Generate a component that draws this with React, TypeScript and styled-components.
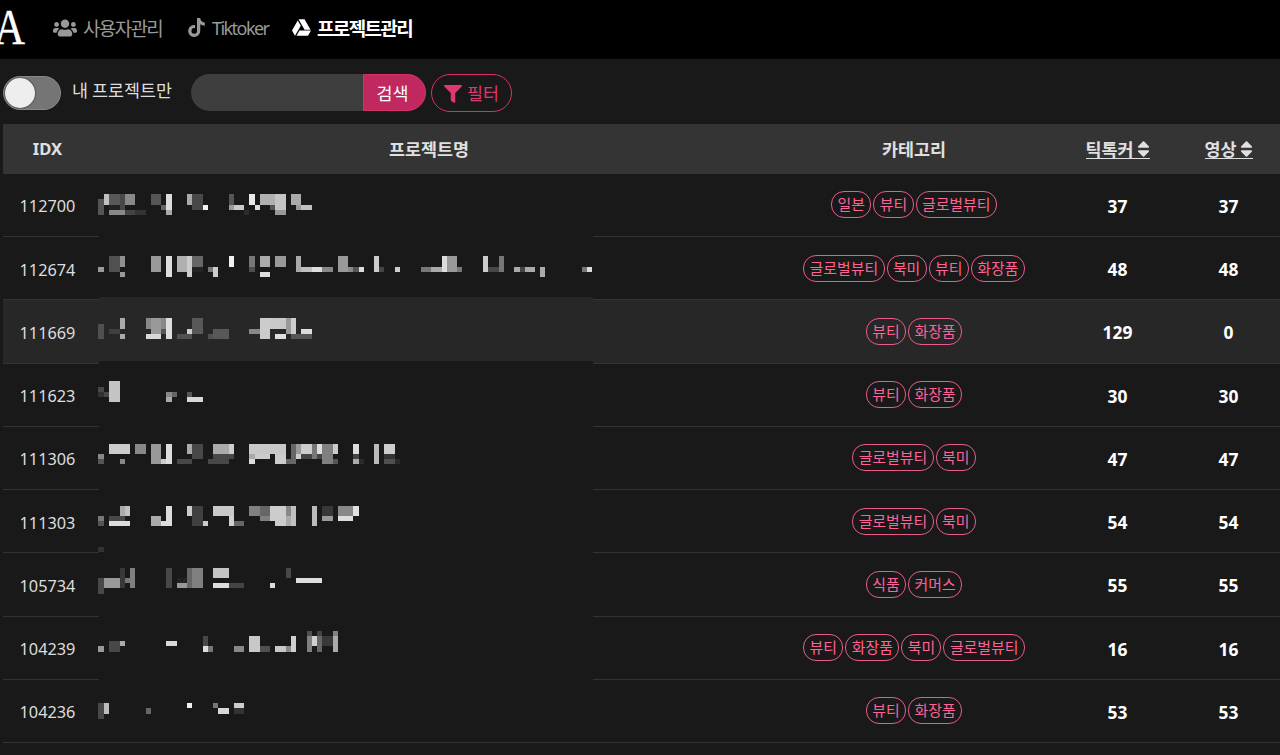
import React from "react";
import styled, { createGlobalStyle } from "styled-components";
import {
  FaUsers,
  FaTiktok,
  FaGoogleDrive,
  FaFilter,
  FaSort,
} from "react-icons/fa";

const GlobalStyle = createGlobalStyle`
  body {
    margin: 0;
    overflow: hidden;
    background-color: #191919;
    color: #ddd;
    font-family: "Noto Sans", "Noto Sans CJK KR", sans-serif;
  }
`;

const Header = styled.header`
  display: flex;
  align-items: center;
  height: 59px;
  padding-bottom: 4px;
  box-sizing: border-box;
  background-color: #000;
`;

const Logo = styled.div`
  width: 25px;
  margin-right: 28px;
  display: flex;
  justify-content: flex-end;
  color: #fff;
  font-family: "Liberation Serif", serif;
  font-size: 51px;
  line-height: 55px;
  transform: scaleX(0.84);
  transform-origin: right;
  -webkit-text-stroke: 0.4px #fff;
`;

const NavItem = styled.a<{ $active?: boolean; $width: number }>`
  display: flex;
  align-items: center;
  width: ${(p) => p.$width}px;
  color: ${(p) => (p.$active ? "#fff" : "#999")};
  font-family: "Noto Sans CJK KR", sans-serif;
  font-size: 19px;
  font-weight: ${(p) => (p.$active ? 700 : 400)};
  letter-spacing: -1.65px;
  white-space: nowrap;

  svg {
    flex: none;
    margin-right: 6px;
  }
`;

const Latin = styled.span`
  font-family: "Noto Sans", sans-serif;
  font-size: 18px;
  letter-spacing: -1.55px;
`;

const Toolbar = styled.div`
  display: flex;
  align-items: center;
  height: 65px;
  padding: 2px 0 0 3px;
  box-sizing: border-box;
  font-family: "Noto Sans CJK KR", sans-serif;
  font-size: 17.4px;
`;

const Toggle = styled.div`
  flex: none;
  width: 58px;
  height: 34px;
  padding: 2px;
  box-sizing: border-box;
  border: 1px solid #888;
  border-radius: 17px;
  background-color: #757575;
`;

const Knob = styled.div`
  width: 30px;
  height: 30px;
  margin-top: -1px;
  margin-left: -1px;
  border-radius: 50%;
  background-color: #eee;
  box-shadow: 0 0 2px #222;
`;

const ToggleLabel = styled.span`
  flex: none;
  width: 130px;
  padding: 0 0 6px 11px;
  box-sizing: border-box;
  white-space: nowrap;
`;

const SearchInput = styled.div`
  width: 172px;
  height: 37px;
  border-radius: 19px 0 0 19px;
  background-color: #3e3e3e;
`;

const SearchButton = styled.div`
  width: 63px;
  height: 37px;
  margin-right: 5px;
  padding-right: 4px;
  box-sizing: border-box;
  border: 1px solid #d83168;
  border-radius: 0 19px 19px 0;
  background-color: #c0295f;
  color: #fff;
  line-height: 36px;
  text-align: center;
`;

const FilterButton = styled.div`
  display: flex;
  align-items: center;
  justify-content: center;
  gap: 5px;
  width: 81px;
  height: 38px;
  box-sizing: border-box;
  border: 1px solid #d83168;
  border-radius: 19px;
  color: #e0376f;

  svg {
    margin-top: 2px;
  }
`;

const Table = styled.div`
  width: 1281px;
  margin-left: 3px;
`;

const columns = "89px 674px 296px 111px 111px";

const HeadRow = styled.div`
  position: relative;
  z-index: 1;
  display: grid;
  grid-template-columns: ${columns};
  align-items: center;
  height: 49.75px;
  background-color: #343434;
  color: #e0e0e0;
  font-size: 17.4px;
  font-weight: 700;
  text-align: center;
`;

const IdxHead = styled.div`
  font-size: 16.6px;
`;

const SortLabel = styled.span`
  display: inline-flex;
  align-items: center;
  gap: 3px;
  height: 18px;
  border-bottom: 1.5px solid #e0e0e0;
  line-height: 18px;

  svg {
    width: 13px;
    height: 20px;
  }
`;

const Row = styled.div<{ $hover?: boolean }>`
  --row-bg: ${(p) => (p.$hover ? "#272727" : "#191919")};
  display: grid;
  grid-template-columns: ${columns};
  align-items: center;
  height: 63.25px;
  box-sizing: border-box;
  border-bottom: 1px solid #333;
  background-color: var(--row-bg);
  text-align: center;
`;

const Idx = styled.div`
  padding-top: 3px;
  font-size: 16.3px;
`;

const Name = styled.div`
  position: relative;
  align-self: stretch;
`;

const Mask = styled.svg`
  position: absolute;
  top: -3px;
  left: 6px;
  width: 495px;
  height: 63.25px;
`;

const Tags = styled.div`
  display: flex;
  justify-content: center;
  gap: 2px;
`;

const Tag = styled.span`
  height: 27px;
  padding: 0 5.4px;
  box-sizing: border-box;
  border: 1px solid #ea5a8c;
  border-radius: 13px;
  color: #ff6296;
  font-family: "Noto Sans CJK KR", sans-serif;
  font-size: 14.9px;
  line-height: 24px;
`;

const Count = styled.div`
  padding-top: 2px;
  color: #fff;
  font-size: 17.4px;
  font-weight: 700;
`;

// column, row, width, height (in cells) and grey level
type Block = [number, number, number, number, string];

interface Project {
  idx: number;
  tags: string[];
  tiktokers: number;
  videos: number;
  hover?: boolean;
  line: number;
  blocks: Block[];
}

const projects: Project[] = [
  {
    idx: 112700,
    tags: ["일본", "뷰티", "글로벌뷰티"],
    tiktokers: 37,
    videos: 37,
    line: 0,
    blocks: [
      [0, 1, 1, 3, "#555"], [1, 0, 1, 2, "#c0c0c0"], [2, 0, 2, 2, "#585858"],
      [4, 0, 1, 3, "#484848"], [2, 2, 2, 1, "#222"], [5, 0, 2, 2, "#888"],
      [2, 3, 3, 1, "#888"], [5, 3, 2, 1, "#444"], [7, 3, 2, 1, "#333"],
      [10, 0, 2, 2, "#555"], [12, 2, 1, 1, "#666"], [13, 0, 1, 3, "#ddd"],
      [13, 3, 1, 1, "#aaa"], [17, 0, 1, 2, "#aaa"], [18, 0, 2, 3, "#484848"],
      [20, 2, 1, 1, "#f4f4f4"], [25, 0, 1, 2, "#555"], [25, 2, 1, 1, "#999"],
      [26, 2, 2, 1, "#c8c8c8"], [28, 3, 1, 1, "#2c2c2c"], [29, 0, 1, 2, "#e8e8e8"],
      [30, 2, 1, 1, "#ddd"], [31, 0, 3, 2, "#b0b0b0"], [33, 2, 1, 1, "#555"],
      [34, 0, 2, 3, "#c4c4c4"], [34, 3, 2, 1, "#999"], [37, 0, 2, 2, "#aaa"],
      [38, 2, 1, 1, "#999"], [39, 2, 2, 1, "#c0c0c0"],
    ],
  },
  {
    idx: 112674,
    tags: ["글로벌뷰티", "북미", "뷰티", "화장품"],
    tiktokers: 48,
    videos: 48,
    line: 12,
    blocks: [
      [0, 2, 1, 1, "#999"], [2, 0, 2, 3, "#505050"], [4, 0, 1, 2, "#909090"],
      [4, 3, 1, 1, "#999"], [10, 0, 2, 3, "#999"], [13, 0, 1, 4, "#ddd"],
      [15, 0, 2, 3, "#b0b0b0"], [17, 0, 1, 4, "#ccc"], [18, 0, 2, 2, "#666"],
      [18, 2, 2, 1, "#242424"], [21, 2, 1, 1, "#777"], [22, 2, 1, 2, "#ccc"],
      [25, 0, 1, 2, "#f0f0f0"], [29, 0, 1, 2, "#777"], [29, 2, 1, 1, "#505050"],
      [31, 0, 2, 2, "#aaa"], [31, 3, 2, 1, "#ddd"], [34, 0, 2, 2, "#999"],
      [38, 0, 1, 3, "#aaa"], [39, 2, 2, 1, "#c0c0c0"], [41, 2, 2, 1, "#ddd"],
      [43, 2, 2, 1, "#888"], [46, 0, 2, 3, "#999"], [48, 2, 1, 1, "#888"],
      [49, 2, 1, 1, "#555"], [50, 2, 1, 1, "#ddd"], [53, 0, 1, 3, "#ccc"],
      [54, 2, 1, 1, "#444"], [57, 2, 1, 1, "#ccc"], [62, 2, 2, 1, "#777"],
      [64, 2, 2, 1, "#aaa"], [66, 0, 1, 3, "#ddd"], [67, 0, 2, 3, "#999"],
      [69, 2, 1, 1, "#777"], [74, 0, 1, 3, "#ccc"], [75, 2, 2, 1, "#484848"],
      [77, 0, 1, 3, "#777"], [80, 2, 1, 1, "#aaa"], [81, 2, 1, 1, "#444"],
      [82, 2, 2, 1, "#aaa"], [85, 2, 1, 2, "#aaa"], [93, 2, 1, 1, "#777"],
      [94, 2, 1, 1, "#ddd"],
    ],
  },
  {
    idx: 111669,
    tags: ["뷰티", "화장품"],
    tiktokers: 129,
    videos: 0,
    hover: true,
    line: 24,
    blocks: [
      [0, 1, 1, 3, "#505050"], [2, 2, 2, 1, "#404040"], [4, 0, 1, 2, "#aaa"],
      [4, 3, 1, 1, "#aaa"], [9, 0, 1, 2, "#888"], [10, 0, 2, 3, "#999"],
      [9, 3, 3, 1, "#d8d8d8"], [12, 0, 1, 2, "#888"], [12, 2, 1, 1, "#555"],
      [13, 0, 1, 4, "#ddd"], [15, 3, 3, 1, "#505050"], [17, 2, 1, 1, "#ccc"],
      [18, 0, 2, 3, "#585858"], [21, 3, 1, 1, "#505050"], [22, 2, 3, 2, "#585858"],
      [29, 2, 2, 1, "#888"], [31, 0, 2, 4, "#ccc"], [33, 0, 3, 2, "#c8c8c8"],
      [36, 0, 1, 3, "#999"], [37, 0, 1, 3, "#ccc"], [34, 3, 2, 1, "#ddd"],
      [37, 3, 4, 1, "#555"], [39, 2, 2, 1, "#ddd"],
    ],
  },
  {
    idx: 111623,
    tags: ["뷰티", "화장품"],
    tiktokers: 30,
    videos: 30,
    line: 36,
    blocks: [
      [0, 1, 1, 1, "#484848"], [0, 2, 1, 1, "#333"], [1, 2, 1, 1, "#484848"],
      [2, 0, 2, 4, "#c4c4c4"], [13, 2, 1, 1, "#888"], [13, 3, 1, 1, "#aaa"],
      [14, 2, 1, 1, "#666"], [17, 2, 1, 1, "#555"], [17, 3, 3, 1, "#d8d8d8"],
    ],
  },
  {
    idx: 111306,
    tags: ["글로벌뷰티", "북미"],
    tiktokers: 47,
    videos: 47,
    line: 48,
    blocks: [
      [0, 2, 1, 1, "#888"], [0, 3, 1, 1, "#555"], [2, 0, 4, 2, "#ccc"],
      [4, 3, 1, 1, "#888"], [7, 0, 2, 2, "#888"], [10, 0, 2, 4, "#999"],
      [12, 3, 1, 1, "#ccc"], [13, 0, 1, 4, "#ddd"], [15, 3, 3, 1, "#484848"],
      [17, 0, 1, 2, "#aaa"], [18, 0, 2, 3, "#484848"], [22, 0, 3, 2, "#aaa"],
      [25, 0, 1, 2, "#ccc"], [22, 2, 4, 1, "#484848"], [21, 3, 4, 1, "#484848"],
      [29, 0, 7, 2, "#c8c8c8"], [29, 2, 1, 1, "#aaa"], [29, 3, 1, 1, "#ddd"],
      [30, 2, 3, 1, "#ccc"], [34, 2, 2, 2, "#ccc"], [36, 3, 2, 1, "#666"],
      [37, 0, 1, 3, "#666"], [38, 0, 1, 2, "#999"], [38, 2, 1, 1, "#ccc"],
      [39, 0, 2, 2, "#ccc"], [39, 2, 2, 1, "#444"], [41, 0, 1, 3, "#777"],
      [42, 0, 1, 2, "#ddd"], [42, 2, 1, 1, "#444"], [43, 0, 2, 4, "#808080"],
      [45, 0, 1, 2, "#ccc"], [45, 3, 1, 1, "#555"], [49, 0, 1, 2, "#ddd"],
      [49, 2, 1, 1, "#444"], [49, 3, 1, 1, "#aaa"], [50, 3, 1, 1, "#2a2a2a"],
      [53, 0, 1, 4, "#bbb"], [55, 0, 2, 2, "#ccc"], [55, 2, 2, 1, "#333"],
      [55, 3, 2, 1, "#505050"], [57, 3, 1, 1, "#2a2a2a"],
    ],
  },
  {
    idx: 111303,
    tags: ["글로벌뷰티", "북미"],
    tiktokers: 54,
    videos: 54,
    line: 60,
    blocks: [
      [0, 2, 1, 1, "#777"], [0, 3, 1, 1, "#555"], [2, 2, 3, 1, "#484848"],
      [4, 0, 1, 2, "#aaa"], [5, 0, 1, 2, "#c0c0c0"], [2, 3, 4, 1, "#ddd"],
      [10, 2, 2, 2, "#aaa"], [12, 3, 1, 1, "#ddd"], [13, 0, 1, 4, "#ddd"],
      [17, 0, 1, 2, "#ccc"], [18, 0, 2, 4, "#404040"], [20, 3, 1, 1, "#ccc"],
      [22, 0, 4, 2, "#c8c8c8"], [25, 2, 1, 2, "#d0d0d0"], [26, 3, 2, 1, "#666"],
      [29, 0, 2, 2, "#808080"], [31, 0, 2, 2, "#666"], [31, 2, 2, 1, "#808080"],
      [33, 0, 3, 3, "#ccc"], [34, 3, 2, 1, "#ccc"], [36, 0, 1, 2, "#888"],
      [36, 2, 1, 2, "#aaa"], [37, 0, 1, 4, "#c0c0c0"], [41, 0, 1, 4, "#bbb"],
      [43, 0, 2, 2, "#383838"], [43, 2, 2, 1, "#999"], [46, 0, 3, 2, "#888"],
      [46, 2, 3, 1, "#ddd"], [49, 0, 1, 2, "#e0e0e0"], [0, 8, 1, 1, "#333"],
    ],
  },
  {
    idx: 105734,
    tags: ["식품", "커머스"],
    tiktokers: 55,
    videos: 55,
    line: 72,
    blocks: [
      [0, -4, 1, 1, "#333"], [0, 2, 1, 3, "#484848"], [1, 2, 3, 2, "#999"],
      [4, 0, 1, 4, "#383838"], [5, 2, 1, 1, "#777"], [6, 0, 1, 4, "#808080"],
      [13, 0, 1, 4, "#484848"], [15, 2, 2, 1, "#222"], [15, 3, 2, 1, "#999"],
      [17, 0, 1, 4, "#666"], [18, 0, 2, 4, "#808080"], [22, 0, 3, 2, "#c4c4c4"],
      [22, 3, 3, 1, "#ddd"], [25, 3, 3, 1, "#444"], [33, 3, 1, 1, "#ddd"],
      [36, 0, 1, 2, "#484848"], [38, 2, 5, 1, "#ddd"],
    ],
  },
  {
    idx: 104239,
    tags: ["뷰티", "화장품", "북미", "글로벌뷰티"],
    tiktokers: 16,
    videos: 16,
    line: 84,
    blocks: [
      [0, 3, 1, 1, "#999"], [2, 2, 2, 2, "#484848"], [4, 2, 1, 1, "#aaa"],
      [13, 2, 2, 1, "#d8d8d8"], [20, 1, 1, 2, "#484848"], [20, 3, 1, 1, "#ddd"],
      [21, 3, 1, 1, "#777"], [26, 3, 2, 1, "#888"], [29, 1, 2, 3, "#c8c8c8"],
      [31, 3, 2, 1, "#505050"], [34, 3, 2, 1, "#c8c8c8"], [36, 3, 1, 1, "#888"],
      [37, 1, 1, 3, "#d0d0d0"], [40, 0, 1, 1, "#505050"], [40, 1, 1, 3, "#808080"],
      [41, 1, 1, 2, "#d0d0d0"], [42, 0, 1, 1, "#444"], [42, 1, 1, 3, "#666"],
      [43, 1, 2, 2, "#383838"], [45, 0, 1, 1, "#808080"], [45, 1, 1, 3, "#aaa"],
    ],
  },
  {
    idx: 104236,
    tags: ["뷰티", "화장품"],
    tiktokers: 53,
    videos: 53,
    line: 98,
    blocks: [
      [0, 0, 1, 3, "#484848"], [1, 0, 1, 2, "#bbb"], [9, 1, 1, 1, "#666"],
      [17, 0, 1, 1, "#f0f0f0"], [22, 0, 1, 1, "#777"], [23, 1, 2, 1, "#d8d8d8"],
      [26, 0, 2, 1, "#ccc"], [26, 1, 2, 1, "#333"],
    ],
  },
];

const CELL = 5.194;
const ROW_HEIGHT = 63.25;

const MaskedName = ({ project, index }: { project: Project; index: number }) => {
  // the cells sit on one grid that runs through all the rows
  const top = 23.25 + project.line * CELL - index * ROW_HEIGHT;
  return (
    <Mask shapeRendering="crispEdges">
      <rect x={1} width={494} height="100%" fill="var(--row-bg)" />
      {project.blocks.map(([x, y, w, h, fill], i) => (
        <rect
          key={i}
          x={x === 0 ? 0 : 0.8 + x * CELL}
          y={top + y * CELL}
          width={x === 0 ? w * CELL + 0.8 : w * CELL}
          height={h * CELL}
          fill={fill}
        />
      ))}
    </Mask>
  );
};

const App: React.FC = () => {
  return (
    <>
      <GlobalStyle />
      <Header>
        <Logo>A</Logo>
        <NavItem $width={134}>
          <FaUsers size={24} />
          사용자관리
        </NavItem>
        <NavItem $width={105}>
          <FaTiktok size={19} />
          <Latin>Tiktoker</Latin>
        </NavItem>
        <NavItem $width={130} $active>
          <FaGoogleDrive size={19} />
          프로젝트관리
        </NavItem>
      </Header>
      <Toolbar>
        <Toggle>
          <Knob />
        </Toggle>
        <ToggleLabel>내 프로젝트만</ToggleLabel>
        <SearchInput />
        <SearchButton>검색</SearchButton>
        <FilterButton>
          <FaFilter size={18} />
          필터
        </FilterButton>
      </Toolbar>
      <Table>
        <HeadRow>
          <IdxHead>IDX</IdxHead>
          <div>프로젝트명</div>
          <div>카테고리</div>
          <div>
            <SortLabel>
              틱톡커
              <FaSort />
            </SortLabel>
          </div>
          <div>
            <SortLabel>
              영상
              <FaSort />
            </SortLabel>
          </div>
        </HeadRow>
        {projects.map((project, index) => (
          <Row key={project.idx} $hover={project.hover}>
            <Idx>{project.idx}</Idx>
            <Name>
              <MaskedName project={project} index={index} />
            </Name>
            <Tags>
              {project.tags.map((tag) => (
                <Tag key={tag}>{tag}</Tag>
              ))}
            </Tags>
            <Count>{project.tiktokers}</Count>
            <Count>{project.videos}</Count>
          </Row>
        ))}
      </Table>
    </>
  );
};

export default App;
